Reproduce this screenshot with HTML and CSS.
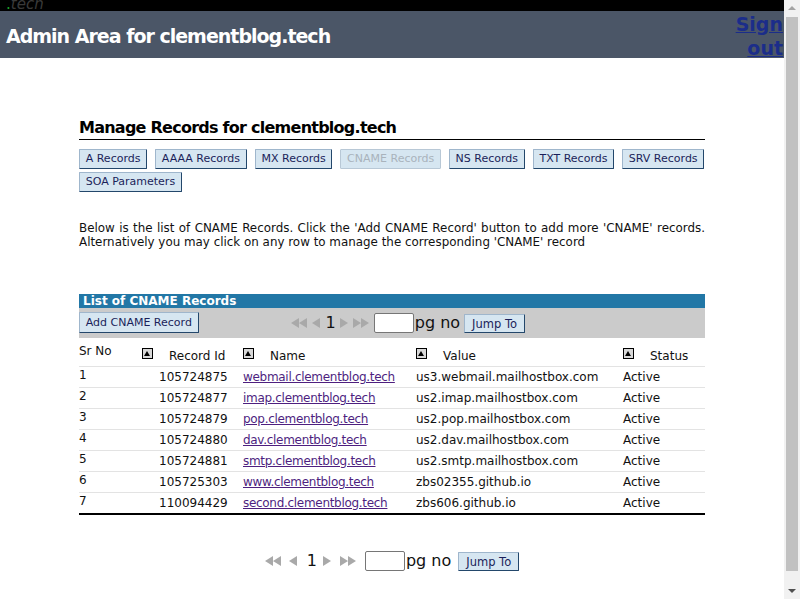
FILE: index.html
```html
<!DOCTYPE html>
<html>
<head>
<meta charset="utf-8">
<title>Admin Area</title>
<link rel="stylesheet" href="styles.css">
</head>
<body>
<div class="page">
  <div class="topbar"><span class="logo"><span class="dot">.</span>tech</span></div>
  <header class="header">
    <h1 class="title">Admin Area for clementblog.tech</h1>
    <a class="signout" href="#">Sign out</a>
  </header>
  <main class="content">
    <h2 class="manage">Manage Records for clementblog.tech</h2>
    <div class="tabs">
      <button class="btn">A Records</button>
      <button class="btn">AAAA Records</button>
      <button class="btn">MX Records</button>
      <button class="btn disabled">CNAME Records</button>
      <button class="btn">NS Records</button>
      <button class="btn">TXT Records</button>
      <button class="btn">SRV Records</button>
      <button class="btn">SOA Parameters</button>
    </div>
    <p class="intro">Below is the list of CNAME Records. Click the 'Add CNAME Record' button to add more 'CNAME' records. Alternatively you may click on any row to manage the corresponding 'CNAME' record</p>

    <section class="panel">
      <div class="panel-title">List of CNAME Records</div>
      <div class="toolbar">
        <button class="btn">Add CNAME Record</button>
        <div class="pager top">
          <svg class="arr first" width="17" height="10" viewBox="0 0 17 10"><path d="M0 5L8 0V10Z M8 5L16 0V10Z" fill="#a9a9a9"/></svg>
          <svg class="arr prev" width="9" height="10" viewBox="0 0 9 10"><path d="M0 5L8 0V10Z" fill="#a9a9a9"/></svg>
          <span class="pnum">1</span>
          <svg class="arr next" width="9" height="10" viewBox="0 0 9 10"><path d="M8 5L0 0V10Z" fill="#a9a9a9"/></svg>
          <svg class="arr last" width="17" height="10" viewBox="0 0 17 10"><path d="M8 5L0 0V10Z M16 5L8 0V10Z" fill="#a9a9a9"/></svg>
          <input class="pginput" type="text">
          <span class="pgno">pg no</span>
          <button class="btn jump">Jump To</button>
        </div>
      </div>
      <table class="records">
        <colgroup>
          <col class="c1"><col class="c2"><col class="c3"><col class="c4"><col class="c5">
        </colgroup>
        <thead>
          <tr>
            <th class="srno">Sr No</th>
            <th><span class="sort"></span><span class="hl">Record Id</span></th>
            <th><span class="sort"></span><span class="hl">Name</span></th>
            <th><span class="sort"></span><span class="hl">Value</span></th>
            <th><span class="sort"></span><span class="hl">Status</span></th>
          </tr>
        </thead>
        <tbody>
          <tr><td class="sr">1</td><td class="rid">105724875</td><td><a href="#">webmail.clementblog.tech</a></td><td>us3.webmail.mailhostbox.com</td><td>Active</td></tr>
          <tr><td class="sr">2</td><td class="rid">105724877</td><td><a href="#">imap.clementblog.tech</a></td><td>us2.imap.mailhostbox.com</td><td>Active</td></tr>
          <tr><td class="sr">3</td><td class="rid">105724879</td><td><a href="#">pop.clementblog.tech</a></td><td>us2.pop.mailhostbox.com</td><td>Active</td></tr>
          <tr><td class="sr">4</td><td class="rid">105724880</td><td><a href="#">dav.clementblog.tech</a></td><td>us2.dav.mailhostbox.com</td><td>Active</td></tr>
          <tr><td class="sr">5</td><td class="rid">105724881</td><td><a href="#">smtp.clementblog.tech</a></td><td>us2.smtp.mailhostbox.com</td><td>Active</td></tr>
          <tr><td class="sr">6</td><td class="rid">105725303</td><td><a href="#">www.clementblog.tech</a></td><td>zbs02355.github.io</td><td>Active</td></tr>
          <tr><td class="sr">7</td><td class="rid">110094429</td><td><a href="#">second.clementblog.tech</a></td><td>zbs606.github.io</td><td>Active</td></tr>
        </tbody>
      </table>
    </section>

    <div class="pager bottom">
      <svg class="arr first" width="17" height="10" viewBox="0 0 17 10"><path d="M0 5L8 0V10Z M8 5L16 0V10Z" fill="#a9a9a9"/></svg>
      <svg class="arr prev" width="9" height="10" viewBox="0 0 9 10"><path d="M0 5L8 0V10Z" fill="#a9a9a9"/></svg>
      <span class="pnum">1</span>
      <svg class="arr next" width="9" height="10" viewBox="0 0 9 10"><path d="M8 5L0 0V10Z" fill="#a9a9a9"/></svg>
      <svg class="arr last" width="17" height="10" viewBox="0 0 17 10"><path d="M8 5L0 0V10Z M16 5L8 0V10Z" fill="#a9a9a9"/></svg>
      <input class="pginput" type="text">
      <span class="pgno">pg no</span>
      <button class="btn jump">Jump To</button>
    </div>
  </main>
</div>
<div class="scrollbar">
  <svg class="sb-arrow" width="16" height="16" viewBox="0 0 16 16"><path d="M4 10L8 6L12 10Z" fill="#a3a3a3"/></svg>
  <div class="sb-track"><div class="sb-thumb"></div></div>
  <svg class="sb-arrow" width="16" height="16" viewBox="0 0 16 16"><path d="M4 6L8 10L12 6Z" fill="#505050"/></svg>
</div>
</body>
</html>
```

FILE: styles.css
```css
html, body {
  margin: 0;
  padding: 0;
}
body {
  font-family: "DejaVu Sans", Verdana, sans-serif;
  font-size: 11px;
  color: #111;
  background: #fff;
  display: flex;
  align-items: flex-start;
  height: 599px;
  overflow: hidden;
}
.page {
  width: 784px;
  flex: none;
}
.scrollbar {
  width: 16px;
  height: 599px;
  flex: none;
  background: #f1f1f1;
  display: flex;
  flex-direction: column;
}
.sb-arrow {
  display: block;
  flex: none;
}
.sb-track {
  flex: 1;
  padding: 1px 2px 12px 2px;
  display: flex;
}
.sb-thumb {
  flex: 1;
  background: #c1c1c1;
}
.topbar {
  height: 11px;
  background: #000;
  overflow: hidden;
}
.logo {
  display: block;
  padding-left: 6px;
  font-size: 15px;
  line-height: 11px;
  font-style: italic;
  color: #3a3a3a;
  margin-top: -1px;
}
.logo .dot {
  color: #1aa32a;
  font-style: normal;
}
.header {
  height: 47px;
  background: #4b5667;
  display: flex;
  justify-content: space-between;
  align-items: flex-start;
}
.title {
  margin: 0;
  padding: 14px 0 0 6px;
  font-size: 19px;
  font-weight: bold;
  color: #fff;
  letter-spacing: -1px;
}
.signout {
  width: 48px;
  margin-right: 1px;
  text-align: right;
  font-size: 19px;
  font-weight: bold;
  line-height: 24px;
  color: #1b2d8a;
  padding-top: 1px;
}
.content {
  width: 626px;
  margin-left: 79px;
  padding-top: 60px;
}
.manage {
  margin: 0;
  font-size: 16px;
  font-weight: bold;
  color: #000;
  letter-spacing: -0.75px;
  border-bottom: 1px solid #000;
  padding-bottom: 1px;
  line-height: 20px;
}
.tabs {
  display: flex;
  flex-wrap: wrap;
  column-gap: 8px;
  row-gap: 3px;
  margin-top: 9px;
}
.btn {
  font-family: "DejaVu Sans", Verdana, sans-serif;
  font-size: 11px;
  height: 20px;
  padding: 0 5.7px;
  background: #d6e6f1;
  color: #1b1f5a;
  border: 1px solid;
  border-color: #9fb6cc #23476b #23476b #9fb6cc;
  border-radius: 1px;
  line-height: 18px;
}
.btn.disabled {
  color: #a9b3bc;
  border-color: #b8c8d6;
}
.intro {
  margin: 29px 0 0 0;
  text-align: justify;
  font-size: 11.9px;
  line-height: 14px;
  color: #111;
}
.panel {
  margin-top: 45px;
}
.panel-title {
  background: #2277a6;
  color: #fff;
  font-weight: bold;
  font-size: 12px;
  line-height: 14px;
  height: 14px;
  padding-left: 4px;
}
.toolbar {
  background: #cbcbcb;
  height: 30px;
  display: flex;
  align-items: flex-start;
  padding-top: 4px;
  box-sizing: border-box;
}
.toolbar .btn {
  height: 21px;
}
.pager {
  display: flex;
  align-items: center;
}
.pager.top {
  margin-left: 92px;
  margin-top: 1px;
}
.pager.bottom {
  justify-content: center;
  margin-top: 36px;
}
.arr {
  display: block;
}
.pager.top .prev { margin-left: 4px; }
.pager.top .pnum { margin: 0 4px 0 5px; }
.pager.top .last { margin-left: 4px; margin-right: 4px; }
.pager.bottom .prev { margin-left: 7px; }
.pager.bottom .pnum { margin: 0 6px 0 9px; }
.pager.bottom .last { margin-left: 8px; margin-right: 8px; }
.pnum {
  font-size: 16px;
  line-height: 20px;
  color: #111;
}
.pginput {
  width: 40px;
  height: 20px;
  box-sizing: border-box;
  border: 1px solid #767676;
  border-radius: 2px;
  margin: 0;
  padding: 0;
  background: #fff;
}
.pgno {
  font-size: 16px;
  line-height: 20px;
  margin: 0 4px 0 1px;
  color: #111;
}
.btn.jump {
  height: 19px;
  font-size: 11.5px;
  padding: 0 7px;
}
.pager.bottom .pgno { margin-right: 7px; }
.records {
  width: 626px;
  border-collapse: collapse;
  table-layout: fixed;
  font-size: 12px;
  border-bottom: 2px solid #000;
}
.c1 { width: 63px; }
.c2 { width: 101px; }
.c3 { width: 173px; }
.c4 { width: 207px; }
.c5 { width: 82px; }
.records th {
  font-weight: normal;
  text-align: left;
  height: 25px;
  padding: 0 0 3px 0;
  vertical-align: bottom;
  white-space: nowrap;
  border-bottom: 1px solid #e3e3e3;
  line-height: 14px;
}
.records th.srno {
  vertical-align: top;
  height: 19px;
  padding-top: 6px;
}
.sort {
  display: inline-block;
  width: 9px;
  height: 9px;
  border: 1px solid #000;
  background: #d8d8d8;
  position: relative;
  vertical-align: 1px;
  margin-right: 16px;
}
.sort::after {
  content: "";
  position: absolute;
  left: 1px;
  top: 2px;
  border-left: 3.5px solid transparent;
  border-right: 3.5px solid transparent;
  border-bottom: 5px solid #000;
}
.records td {
  height: 20px;
  padding: 0;
  border-bottom: 1px solid #e3e3e3;
  white-space: nowrap;
  vertical-align: middle;
  color: #111;
}
.records tbody tr:last-child td {
  border-bottom: none;
}
.records td.sr {
  vertical-align: top;
  padding-top: 1px;
  height: 19px;
}
.records td.rid {
  padding-left: 17px;
}
.records a {
  color: #4e1f7f;
  letter-spacing: -0.3px;
}
```
